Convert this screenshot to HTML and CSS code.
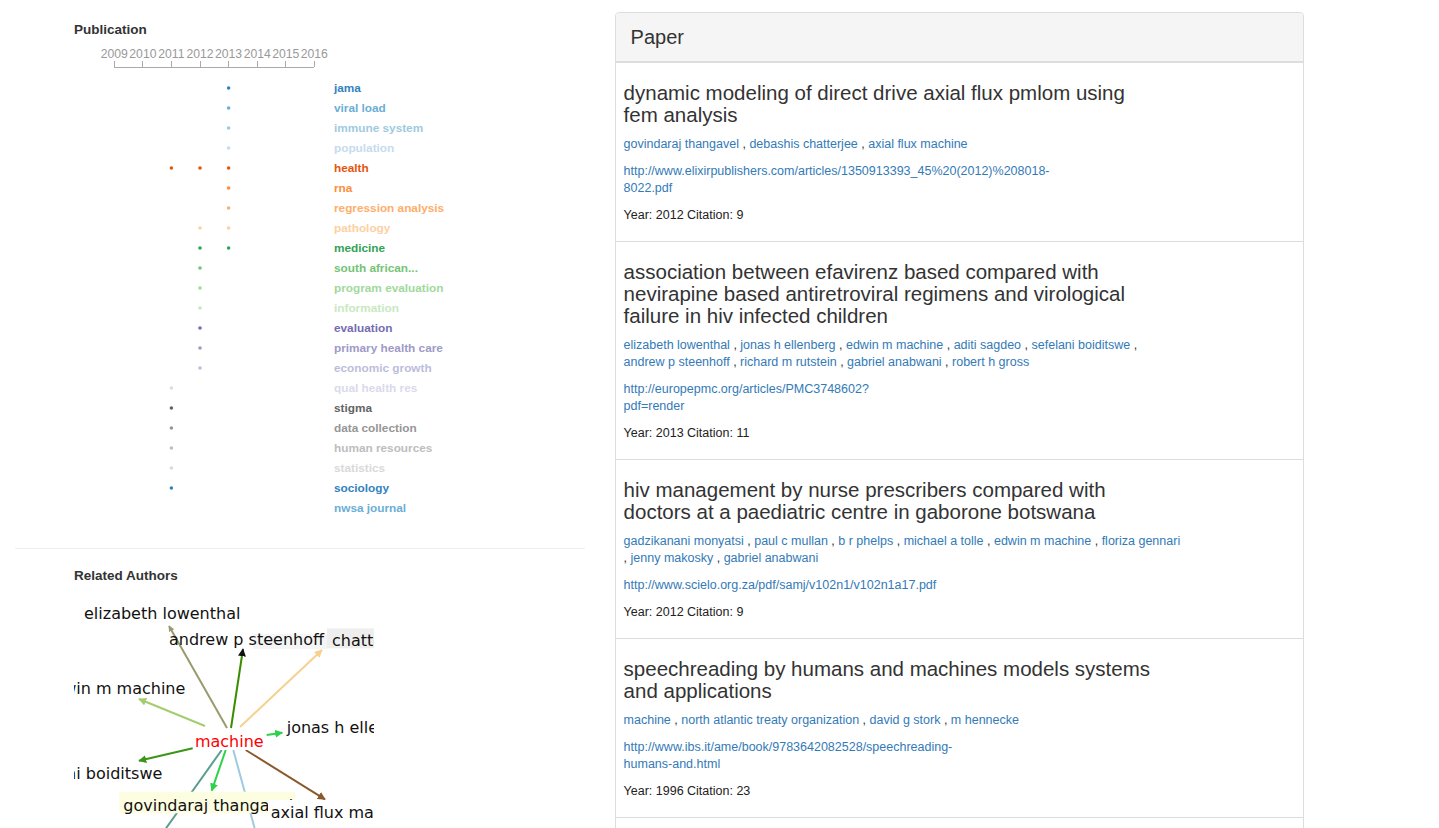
FILE: index.html
```html
<!DOCTYPE html>
<html>
<head>
<meta charset="utf-8">
<title>Publication</title>
<link rel="stylesheet" href="styles.css">
</head>
<body>
<div class="row">
  <div class="col-left">
    <section class="pub">
      <h5 class="sec-title">Publication</h5>
      <svg class="timeline" width="420" height="490" viewBox="0 0 420 490">
        <g class="axis">
          <line x1="40.3" y1="27" x2="240.3" y2="27"/>
          <line x1="40.3" y1="21" x2="40.3" y2="27"/>
          <line x1="68.9" y1="21" x2="68.9" y2="27"/>
          <line x1="97.4" y1="21" x2="97.4" y2="27"/>
          <line x1="126" y1="21" x2="126" y2="27"/>
          <line x1="154.6" y1="21" x2="154.6" y2="27"/>
          <line x1="183.2" y1="21" x2="183.2" y2="27"/>
          <line x1="211.7" y1="21" x2="211.7" y2="27"/>
          <line x1="240.3" y1="21" x2="240.3" y2="27"/>
          <text x="40.3" y="18">2009</text>
          <text x="68.9" y="18">2010</text>
          <text x="97.4" y="18">2011</text>
          <text x="126" y="18">2012</text>
          <text x="154.6" y="18">2013</text>
          <text x="183.2" y="18">2014</text>
          <text x="211.7" y="18">2015</text>
          <text x="240.3" y="18">2016</text>
        </g>
        <g class="rows">
          <g fill="#3182bd"><circle cx="154.6" cy="48" r="1.8"/><text x="260" y="52">jama</text></g>
          <g fill="#6baed6"><circle cx="154.6" cy="68" r="1.8"/><text x="260" y="72">viral load</text></g>
          <g fill="#9ecae1"><circle cx="154.6" cy="88" r="1.8"/><text x="260" y="92">immune system</text></g>
          <g fill="#c6dbef"><circle cx="154.6" cy="108" r="1.8"/><text x="260" y="112">population</text></g>
          <g fill="#e6550d"><circle cx="97.4" cy="128" r="1.8"/><circle cx="126" cy="128" r="1.8"/><circle cx="154.6" cy="128" r="1.8"/><text x="260" y="132">health</text></g>
          <g fill="#fd8d3c"><circle cx="154.6" cy="148" r="1.8"/><text x="260" y="152">rna</text></g>
          <g fill="#fdae6b"><circle cx="154.6" cy="168" r="1.8"/><text x="260" y="172">regression analysis</text></g>
          <g fill="#fdd0a2"><circle cx="126" cy="188" r="1.8"/><circle cx="154.6" cy="188" r="1.8"/><text x="260" y="192">pathology</text></g>
          <g fill="#31a354"><circle cx="126" cy="208" r="1.8"/><circle cx="154.6" cy="208" r="1.8"/><text x="260" y="212">medicine</text></g>
          <g fill="#74c476"><circle cx="126" cy="228" r="1.8"/><text x="260" y="232">south african...</text></g>
          <g fill="#a1d99b"><circle cx="126" cy="248" r="1.8"/><text x="260" y="252">program evaluation</text></g>
          <g fill="#c7e9c0"><circle cx="126" cy="268" r="1.8"/><text x="260" y="272">information</text></g>
          <g fill="#756bb1"><circle cx="126" cy="288" r="1.8"/><text x="260" y="292">evaluation</text></g>
          <g fill="#9e9ac8"><circle cx="126" cy="308" r="1.8"/><text x="260" y="312">primary health care</text></g>
          <g fill="#bcbddc"><circle cx="126" cy="328" r="1.8"/><text x="260" y="332">economic growth</text></g>
          <g fill="#dadaeb"><circle cx="97.4" cy="348" r="1.8"/><text x="260" y="352">qual health res</text></g>
          <g fill="#636363"><circle cx="97.4" cy="368" r="1.8"/><text x="260" y="372">stigma</text></g>
          <g fill="#969696"><circle cx="97.4" cy="388" r="1.8"/><text x="260" y="392">data collection</text></g>
          <g fill="#bdbdbd"><circle cx="97.4" cy="408" r="1.8"/><text x="260" y="412">human resources</text></g>
          <g fill="#d9d9d9"><circle cx="97.4" cy="428" r="1.8"/><text x="260" y="432">statistics</text></g>
          <g fill="#3182bd"><circle cx="97.4" cy="448" r="1.8"/><text x="260" y="452">sociology</text></g>
          <g fill="#6baed6"><text x="260" y="472">nwsa journal</text></g>
        </g>
      </svg>
    </section>
    <hr class="divider">
    <section class="related">
      <h5 class="sec-title">Related Authors</h5>
      <svg class="graph" width="300" height="260" viewBox="0 0 300 260">
        <defs>
          <marker id="m-olive" viewBox="0 0 10 10" refX="9" refY="5" markerWidth="3" markerHeight="3" orient="auto"><path d="M0,0 L10,5 L0,10 z" fill="#9a9a6c"/></marker>
          <marker id="m-dark" viewBox="0 0 10 10" refX="9" refY="5" markerWidth="4" markerHeight="4" orient="auto"><path d="M0,0 L10,5 L0,10 z" fill="#111"/></marker>
          <marker id="m-orange" viewBox="0 0 10 10" refX="9" refY="5" markerWidth="4" markerHeight="4" orient="auto"><path d="M0,0 L10,5 L0,10 z" fill="#f5d08e"/></marker>
          <marker id="m-lgreen" viewBox="0 0 10 10" refX="9" refY="5" markerWidth="4" markerHeight="4" orient="auto"><path d="M0,0 L10,5 L0,10 z" fill="#a4cc70"/></marker>
          <marker id="m-bgreen" viewBox="0 0 10 10" refX="9" refY="5" markerWidth="4" markerHeight="4" orient="auto"><path d="M0,0 L10,5 L0,10 z" fill="#2ed24a"/></marker>
          <marker id="m-mgreen" viewBox="0 0 10 10" refX="9" refY="5" markerWidth="4" markerHeight="4" orient="auto"><path d="M0,0 L10,5 L0,10 z" fill="#3a9614"/></marker>
          <marker id="m-brown" viewBox="0 0 10 10" refX="9" refY="5" markerWidth="4" markerHeight="4" orient="auto"><path d="M0,0 L10,5 L0,10 z" fill="#8b5a2b"/></marker>
        </defs>
        <g class="edges">
          <line x1="153" y1="138" x2="95" y2="36" stroke="#9a9a6c" marker-end="url(#m-olive)"/>
          <line x1="157" y1="138" x2="169" y2="59" stroke="#3c8c00" marker-end="url(#m-dark)"/>
          <line x1="166" y1="137" x2="248" y2="60" stroke="#f5d08e" marker-end="url(#m-orange)"/>
          <line x1="131" y1="136" x2="65" y2="109" stroke="#a4cc70" marker-end="url(#m-lgreen)"/>
          <line x1="192.7" y1="145" x2="208.3" y2="142.7" stroke="#2ed24a" marker-end="url(#m-bgreen)"/>
          <line x1="118.7" y1="158.3" x2="65" y2="170.7" stroke="#3a9614" marker-end="url(#m-mgreen)"/>
          <line x1="151.7" y1="160" x2="137.7" y2="200.7" stroke="#2ed24a" marker-end="url(#m-bgreen)"/>
          <line x1="171.7" y1="160" x2="251" y2="209.3" stroke="#8b5a2b" marker-end="url(#m-brown)"/>
          <line x1="147.7" y1="160" x2="78" y2="258" stroke="#5a9e8f"/>
          <line x1="159.3" y1="160" x2="186" y2="258" stroke="#9ecae1"/>
        </g>
        <g class="nodes">
          <text x="10" y="29">elizabeth lowenthal</text>
          <rect x="179" y="44" width="74" height="15" fill="#f5f5f5"/>
          <text x="95" y="54.5">andrew p steenhoff</text>
          <rect x="253" y="38.3" width="60" height="20" fill="#eeeeee"/>
          <text x="258" y="56">chatterjee</text>
          <text x="111.3" y="104.3" text-anchor="end">edwin m machine</text>
          <text x="212.7" y="143.3">jonas h ellenberg</text>
          <text x="88.3" y="189.3" text-anchor="end">sefelani boiditswe</text>
          <rect x="45.3" y="201.7" width="176" height="21.6" fill="#fdfde2"/>
          <text x="49.3" y="220.7">govindaraj thangavel</text>
          <rect x="194" y="210" width="120" height="30" fill="#ffffff"/>
          <text x="196.7" y="228.3">axial flux machine</text>
          <text class="center-node" x="155.3" y="156.7" text-anchor="middle">machine</text>
        </g>
      </svg>
    </section>
  </div>
  <div class="col-right">
    <div class="panel">
      <div class="panel-heading">Paper</div>
      <div class="panel-body">
        <div class="paper">
          <h4 class="paper-title">dynamic modeling of direct drive axial flux pmlom using<br>fem analysis</h4>
          <p class="paper-authors"><a>govindaraj thangavel</a> , <a>debashis chatterjee</a> , <a>axial flux machine</a></p>
          <p class="paper-url"><a>http://www.elixirpublishers.com/articles/1350913393_45%20(2012)%208018-<br>8022.pdf</a></p>
          <p class="paper-meta">Year: 2012 Citation: 9</p>
        </div>
        <div class="paper">
          <h4 class="paper-title">association between efavirenz based compared with<br>nevirapine based antiretroviral regimens and virological<br>failure in hiv infected children</h4>
          <p class="paper-authors"><a>elizabeth lowenthal</a> , <a>jonas h ellenberg</a> , <a>edwin m machine</a> , <a>aditi sagdeo</a> , <a>sefelani boiditswe</a> ,<br><a>andrew p steenhoff</a> , <a>richard m rutstein</a> , <a>gabriel anabwani</a> , <a>robert h gross</a></p>
          <p class="paper-url"><a>http://europepmc.org/articles/PMC3748602?<br>pdf=render</a></p>
          <p class="paper-meta">Year: 2013 Citation: 11</p>
        </div>
        <div class="paper">
          <h4 class="paper-title">hiv management by nurse prescribers compared with<br>doctors at a paediatric centre in gaborone botswana</h4>
          <p class="paper-authors"><a>gadzikanani monyatsi</a> , <a>paul c mullan</a> , <a>b r phelps</a> , <a>michael a tolle</a> , <a>edwin m machine</a> , <a>floriza gennari</a><br>, <a>jenny makosky</a> , <a>gabriel anabwani</a></p>
          <p class="paper-url"><a>http://www.scielo.org.za/pdf/samj/v102n1/v102n1a17.pdf</a></p>
          <p class="paper-meta">Year: 2012 Citation: 9</p>
        </div>
        <div class="paper">
          <h4 class="paper-title">speechreading by humans and machines models systems<br>and applications</h4>
          <p class="paper-authors"><a>machine</a> , <a>north atlantic treaty organization</a> , <a>david g stork</a> , <a>m hennecke</a></p>
          <p class="paper-url"><a>http://www.ibs.it/ame/book/9783642082528/speechreading-<br>humans-and.html</a></p>
          <p class="paper-meta">Year: 1996 Citation: 23</p>
        </div>
      </div>
    </div>
  </div>
</div>
</body>
</html>
```

FILE: styles.css
```css
* { box-sizing: border-box; }
html, body { margin: 0; padding: 0; background: #fff; }
body {
  font-family: "Liberation Sans", Arial, sans-serif;
  color: #333;
  font-size: 12px;
  overflow: hidden;
}
.row { display: flex; align-items: flex-start; }
.col-left { width: 41.6667%; padding: 0 15px; }
.col-right { width: 50%; padding: 0 15px; }

.sec-title {
  margin: 0;
  padding-left: 59px;
  font-size: 13.5px;
  line-height: 18px;
  font-weight: bold;
  color: #333;
}
.pub { padding-top: 21px; }
.timeline { display: block; margin: 1px 0 0 59px; }
.axis line { stroke: #aaa; stroke-width: 1; shape-rendering: crispEdges; }
.axis text {
  font-family: "Liberation Sans", Arial, sans-serif;
  font-size: 12.2px;
  fill: #999;
  text-anchor: middle;
}
.rows text {
  font-family: "Liberation Sans", Arial, sans-serif;
  font-size: 11.8px;
  font-weight: bold;
}
.divider { border: 0; border-top: 1px solid #eee; margin: 18px 0 0; height: 0; }
.related { padding-top: 18px; }
.graph { display: block; margin: 5px 0 0 59px; }
.edges line { stroke-width: 2; }
.nodes text {
  font-family: "DejaVu Sans", Verdana, sans-serif;
  font-size: 16px;
  fill: #111;
}
.nodes .center-node { fill: #ff0000; paint-order: stroke; stroke: #fff; stroke-width: 6px; }

.panel {
  margin-top: 12px;
  border: 1px solid #ddd;
  border-radius: 4px;
  min-height: 900px;
}
.panel-heading {
  background: #f5f5f5;
  border-bottom: 2px solid #ddd;
  border-radius: 3px 3px 0 0;
  padding: 10px 15px;
  font-size: 20px;
  line-height: 28px;
  color: #333;
}
.paper {
  padding: 19px 8px 17px;
  border-bottom: 1px solid #ddd;
}
.paper-title {
  margin: 0 0 10px;
  font-size: 20.5px;
  line-height: 22px;
  font-weight: normal;
  color: #333;
  white-space: nowrap;
}
.paper p { margin: 0 0 10px; font-size: 12.5px; line-height: 17px; white-space: nowrap; }
.paper p.paper-meta { margin: 0; color: #222; }
.paper a { color: #337ab7; text-decoration: none; }
```
